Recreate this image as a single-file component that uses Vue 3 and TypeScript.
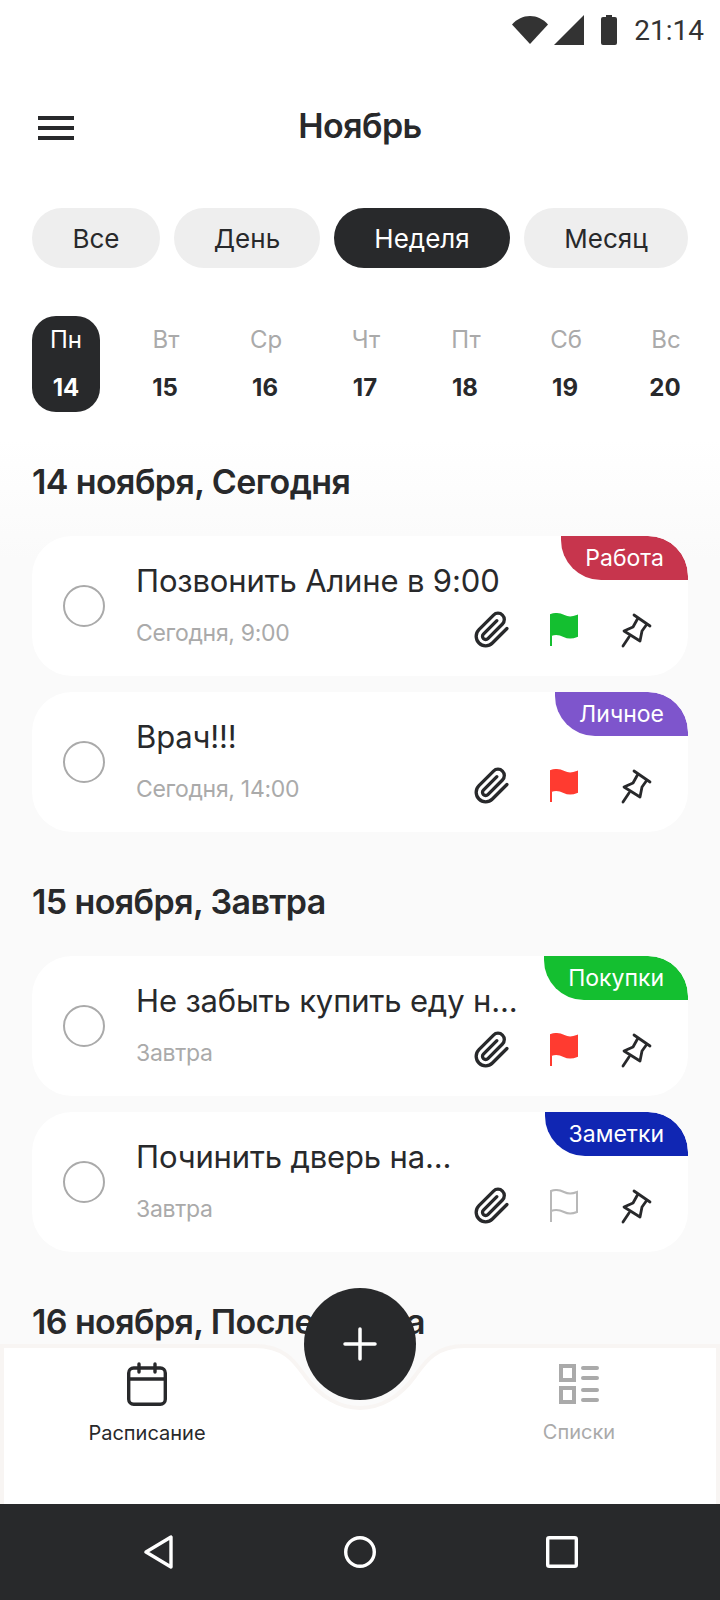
<script setup lang="ts">
import { ref } from 'vue'

type FlagState = 'green' | 'red' | 'none'

interface Task {
  title: string
  date: string
  tag: string
  tagColor: string
  flag: FlagState
}

interface TaskGroup {
  heading: string
  tasks: Task[]
}

const filters = ref<string[]>(['Все', 'День', 'Неделя', 'Месяц'])
const activeFilter = ref<string>('Неделя')

const days = ref([
  { label: 'Пн', num: 14 },
  { label: 'Вт', num: 15 },
  { label: 'Ср', num: 16 },
  { label: 'Чт', num: 17 },
  { label: 'Пт', num: 18 },
  { label: 'Сб', num: 19 },
  { label: 'Вс', num: 20 },
])

const groups = ref<TaskGroup[]>([
  {
    heading: '14 ноября, Сегодня',
    tasks: [
      { title: 'Позвонить Алине в 9:00', date: 'Сегодня, 9:00', tag: 'Работа', tagColor: '#c7354d', flag: 'green' },
      { title: 'Врач!!!', date: 'Сегодня, 14:00', tag: 'Личное', tagColor: '#7e55cc', flag: 'red' },
    ],
  },
  {
    heading: '15 ноября, Завтра',
    tasks: [
      { title: 'Не забыть купить еду н...', date: 'Завтра', tag: 'Покупки', tagColor: '#14bf30', flag: 'red' },
      { title: 'Починить дверь на...', date: 'Завтра', tag: 'Заметки', tagColor: '#1026b3', flag: 'none' },
    ],
  },
  { heading: '16 ноября, Послезавтра', tasks: [] },
])
</script>

<template>
  <div class="phone">
    <div class="status">
      <svg class="st-icon" width="36" height="28" viewBox="0 0 36 28">
        <path d="M0 8.500C5 3 11 0 18 0s13 3 18 8.500L18 28z" fill="#333" />
      </svg>
      <svg class="st-icon" width="30" height="30" viewBox="0 0 30 30">
        <path d="M30 0v30H0z" fill="#333" />
      </svg>
      <svg class="st-icon" width="16" height="30" viewBox="0 0 16 30">
        <path d="M5 0h6v2h3a2 2 0 0 1 2 2v24a2 2 0 0 1-2 2H2a2 2 0 0 1-2-2V4a2 2 0 0 1 2-2h3z" fill="#333" />
      </svg>
      <span class="time">21:14</span>
    </div>

    <div class="content">
      <header class="top">
        <div class="burger"><i></i><i></i><i></i></div>
        <h1 class="month">Ноябрь</h1>
      </header>

      <div class="chips">
        <div
          v-for="f in filters"
          :key="f"
          class="chip"
          :class="{ active: f === activeFilter }"
        >
          {{ f }}
        </div>
      </div>

      <div class="week">
        <div
          v-for="(d, i) in days"
          :key="d.num"
          class="day"
          :class="{ active: i === 0 }"
        >
          <span class="day-label">{{ d.label }}</span>
          <span class="day-num">{{ d.num }}</span>
        </div>
      </div>

      <section
        v-for="g in groups"
        :key="g.heading"
        class="group"
      >
        <h2 class="group-title">{{ g.heading }}</h2>
        <div
          v-for="t in g.tasks"
          :key="t.title"
          class="card"
        >
          <span
            class="tag"
            :style="{ background: t.tagColor }"
          >{{ t.tag }}</span>
          <span class="check"></span>
          <div class="body">
            <div class="task-title">{{ t.title }}</div>
            <div class="task-date">{{ t.date }}</div>
          </div>
          <div class="actions">
            <svg width="38" height="38" viewBox="0 0 24 24" fill="none" stroke="#28292b" stroke-width="2.100" stroke-linecap="round" stroke-linejoin="round">
              <path d="M21.440 11.050l-9.190 9.190a6 6 0 0 1-8.490-8.490l9.190-9.190a4 4 0 0 1 5.660 5.660l-9.200 9.190a2 2 0 0 1-2.830-2.830l8.490-8.480" />
            </svg>
            <svg class="flag" width="30" height="34" viewBox="0 0 30 34">
              <path
                d="M2 33V2c5-2 9-1 13 1 4 2 8 2 13 0v20c-5 2-9 2-13 0-4-2-8-3-13-1"
                :fill="t.flag === 'green' ? '#14bf30' : t.flag === 'red' ? '#ff3b30' : 'none'"
                :stroke="t.flag === 'green' ? '#14bf30' : t.flag === 'red' ? '#ff3b30' : '#b8b8b8'"
                stroke-width="2"
              />
            </svg>
            <svg width="32" height="36" viewBox="0 0 32 36" fill="none" stroke="#28292b" stroke-width="2.800" stroke-linecap="round" stroke-linejoin="round">
              <path d="M14 3l16 11M18 6l-5 9-9 4 16 10 2-10 5-7M9 25l-6 9" />
            </svg>
          </div>
        </div>
      </section>
    </div>

    <nav class="tabs">
      <svg class="tabs-bg" width="720" height="162" viewBox="0 0 720 162">
        <path
          d="M2 4H255C285 4 295 20 305 34C320 55 340 66 360 66C380 66 400 55 415 34C425 20 435 4 465 4H718V170H2Z"
          fill="#fff"
          stroke="#f8f5f3"
          stroke-width="4"
        />
      </svg>
      <div class="tab on">
        <svg width="40" height="44" viewBox="0 0 40 44" fill="none" stroke="#28292b" stroke-width="3.400" stroke-linecap="round">
          <rect x="1.700" y="6" width="36.600" height="36.300" rx="5" />
          <path d="M2 17H38M12 2V10M28 2V10" />
        </svg>
        <span>Расписание</span>
      </div>
      <button class="fab" aria-label="Добавить">
        <svg width="34" height="34" viewBox="0 0 34 34" stroke="#fff" stroke-width="3.500" stroke-linecap="round">
          <path d="M17 2V32M2 17H32" />
        </svg>
      </button>
      <div class="tab list">
        <svg width="40" height="40" viewBox="0 0 40 40" fill="none" stroke="#aaa" stroke-width="4">
          <rect x="2" y="2" width="13" height="14" />
          <rect x="2" y="24" width="13" height="14" />
          <path d="M24 4H38M24 14H38M24 26H38M24 36H38" stroke-linecap="round" />
        </svg>
        <span>Списки</span>
      </div>
    </nav>

    <div class="sysnav">
      <svg width="30" height="34" viewBox="0 0 30 34" fill="none" stroke="#fff" stroke-width="3.400" stroke-linejoin="round">
        <path d="M2 17L27 2V32Z" />
      </svg>
      <svg width="32" height="32" viewBox="0 0 32 32" fill="none" stroke="#fff" stroke-width="3.400">
        <circle cx="16" cy="16" r="14.300" />
      </svg>
      <svg width="32" height="32" viewBox="0 0 32 32" fill="none" stroke="#fff" stroke-width="3.400" stroke-linejoin="round">
        <rect x="1.700" y="1.700" width="28.600" height="28.600" rx="1.500" />
      </svg>
    </div>
  </div>
</template>

<style>
html,
body {
  margin: 0;
  background: #fff;
}
</style>

<style scoped>
.phone {
  position: relative;
  width: 720px;
  height: 1600px;
  overflow: hidden;
  display: flex;
  flex-direction: column;
  font-family: Inter, 'Noto Sans', sans-serif;
  color: #28292b;
  background: linear-gradient(#fff 440px, #fafafa 560px);
}

.status {
  height: 60px;
  flex: none;
  display: flex;
  align-items: center;
  justify-content: flex-end;
  padding-right: 16px;
}

.st-icon {
  margin-right: 7px;
}

.st-icon:nth-child(1) {
  margin-right: 6px;
}

.st-icon:nth-child(3) {
  margin-left: 10px;
  margin-right: 17px;
}

.time {
  font-family: Roboto, sans-serif;
  font-size: 28px;
  color: #333;
}

.content {
  flex: 1;
  min-height: 0;
}

.top {
  position: relative;
  height: 60px;
  margin-top: 36px;
  display: flex;
  align-items: center;
  justify-content: center;
}

.burger {
  position: absolute;
  left: 38px;
  top: 20px;
  width: 36px;
  display: flex;
  flex-direction: column;
  gap: 6px;
}

.burger i {
  display: block;
  height: 4px;
  background: #28292b;
}

.month {
  margin: 0;
  font-size: 34px;
  font-weight: 600;
  letter-spacing: -0.6px;
  line-height: 62px;
}

.chips {
  display: grid;
  grid-template-columns: 128px 146px 176px 164px;
  gap: 14px;
  padding: 0 32px;
  margin-top: 52px;
}

.chip {
  height: 60px;
  border-radius: 30px;
  background: #eee;
  font-size: 26px;
  line-height: 62px;
  text-align: center;
}

.chip.active {
  background: #28292b;
  color: #fff;
}

.week {
  display: flex;
  justify-content: space-between;
  padding: 0 20px 0 32px;
  margin-top: 48px;
}

.day {
  width: 68px;
  height: 96px;
  border-radius: 24px;
  display: flex;
  flex-direction: column;
  align-items: center;
  padding-top: 9px;
  box-sizing: border-box;
}

.day.active {
  background: #28292b;
  color: #fff;
}

.day-label {
  font-size: 24px;
  line-height: 30px;
  color: #aaa;
}

.day.active .day-label {
  color: #fff;
}

.day-num {
  font-size: 24px;
  line-height: 30px;
  font-weight: 700;
  margin: 18px 2px 0 0;
}

.day.active .day-num {
  margin-right: 0;
}

.group {
  padding: 0 32px;
  margin-top: 46px;
}

.group-title {
  margin: 0 0 30px;
  font-size: 34px;
  font-weight: 600;
  letter-spacing: -0.6px;
  line-height: 48px;
  white-space: nowrap;
}

.card {
  position: relative;
  height: 140px;
  border-radius: 40px;
  background: #fff;
  display: flex;
  overflow: hidden;
}

.card + .card {
  margin-top: 16px;
}

.tag {
  position: absolute;
  top: 0;
  right: 0;
  height: 44px;
  padding: 0 24px;
  border-radius: 0 40px 0 40px;
  color: #fff;
  font-size: 23px;
  line-height: 44px;
}

.check {
  flex: none;
  width: 42px;
  height: 42px;
  margin: 49px 0 0 31px;
  border: 2px solid #aaa;
  border-radius: 50%;
  box-sizing: border-box;
}

.body {
  margin-left: 31px;
  padding-top: 23px;
}

.task-title {
  font-size: 31px;
  letter-spacing: -0.15px;
  line-height: 44px;
  white-space: nowrap;
}

.task-date {
  margin-top: 14px;
  font-size: 23px;
  letter-spacing: -0.3px;
  line-height: 32px;
  color: #aaa;
}

.actions {
  position: absolute;
  right: 36px;
  top: 75px;
  display: flex;
  align-items: center;
  gap: 38px;
}

.flag {
  margin-right: 3px;
}

.tabs {
  position: absolute;
  left: 0;
  right: 0;
  bottom: 96px;
  height: 162px;
  display: flex;
  justify-content: space-between;
}

.tabs-bg {
  position: absolute;
  left: 0;
  top: 0;
}

.tab {
  position: relative;
  width: 294px;
  display: flex;
  flex-direction: column;
  align-items: center;
  padding-top: 20px;
  font-size: 20px;
  line-height: 28px;
  color: #aaa;
}

.tab.on {
  color: #28292b;
}

.tab span {
  margin-top: 13px;
}

.tab.list {
  padding: 22px 0 0 12px;
  box-sizing: content-box;
  width: 282px;
}

.tab.list span {
  margin-top: 14px;
}

.fab {
  position: absolute;
  left: 304px;
  top: -54px;
  width: 112px;
  height: 112px;
  border: none;
  border-radius: 50%;
  background: #28292b;
  display: flex;
  align-items: center;
  justify-content: center;
}

.sysnav {
  position: relative;
  flex: none;
  height: 96px;
  background: #28292b;
  display: flex;
  align-items: center;
  justify-content: space-between;
  padding: 0 142px 0 144px;
}
</style>
